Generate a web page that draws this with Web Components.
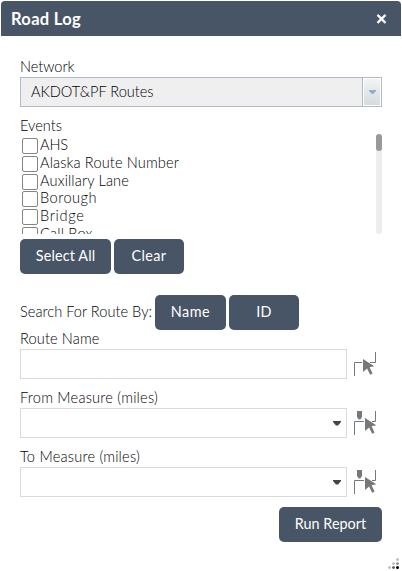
<!DOCTYPE html>
<html lang="en">
<head>
<meta charset="utf-8">
<title>Road Log</title>
<style>
html,body{margin:0;height:100%;overflow:hidden;background:#fff}
body{font-family:Lato,"Open Sans",sans-serif;font-size:14.6px;font-weight:300;color:#000}
</style>
</head>
<body>
<road-log></road-log>
<script>
const define = (name, html, setup) => customElements.define(name, class extends HTMLElement {
  connectedCallback() {
    if (this.shadowRoot) return;
    const t = document.createElement('template');
    t.innerHTML = html;
    this.attachShadow({mode: 'open'}).append(t.content.cloneNode(true));
    if (setup) setup(this, this.shadowRoot);
  }
});

// A line of text whose tracking is fitted to the given width.
define('fit-text', `<style>:host{display:block;white-space:nowrap;line-height:20px;height:18px}span{display:inline-block}</style><span></span>`, (el, root) => {
  const s = root.querySelector('span'), text = el.getAttribute('text');
  s.textContent = text;
  const w = parseFloat(el.getAttribute('w'));
  const natural = s.getBoundingClientRect().width;
  s.style.letterSpacing = ((w - natural) / text.length).toFixed(3) + 'px';
});

define('action-button', `<style>
:host{display:block;height:35px;flex:none}
button{all:unset;box-sizing:border-box;width:100%;height:35px;border-radius:5px;background:#485566;color:#fff;display:flex;justify-content:center;padding-top:7px;font-weight:400;font-size:14.4px}
</style><button><slot></slot></button>`);

define('title-bar', `<style>
:host{display:flex;justify-content:space-between;height:35px;margin:0 1px;background:#485566;color:#fff;border-radius:4px 4px 0 0;font-size:16.5px;font-weight:700}
fit-text{margin:8px 0 0 10px}svg{margin:13px 14px 0 0}
</style><fit-text text="Road Log" w="70"></fit-text>
<svg width="11" height="11" viewBox="0 0 11 11"><path d="M1.5 .9L9.5 8.9M9.5 .9L1.5 8.9" stroke="#fff" stroke-width="2.2"/></svg>`);

define('network-select', `<style>
:host{display:flex;box-sizing:border-box;height:30px;border:1px solid #b1b8ca;background:#efefef}
fit-text{flex:1;margin:4px 0 0 10px}
.b{box-sizing:border-box;width:19px;border-left:1px solid #b1b8ca;background:#fff;padding:1px}
.b div{height:26px;background:linear-gradient(#f2f4f5,#d6dbde);display:flex;align-items:center;justify-content:center}
</style><fit-text text="AKDOT&amp;PF Routes" w="122.5"></fit-text>
<div class="b"><div><svg width="7" height="4" viewBox="0 0 7 4"><path d="M0 0h7v1L4.2 4H2.8L0 1z" fill="#92acd0"/></svg></div></div>`);

define('check-row', `<style>
:host{display:flex;height:17.75px;flex:none}
i{box-sizing:border-box;width:16px;height:16px;margin:4px 2px 0;border:1px solid #858585;border-radius:2px;background:#fff;flex:none}
</style><i></i><slot></slot>`);

define('event-list', `<style>
:host{display:flex;justify-content:space-between;height:100px;overflow:hidden}
.rows{display:flex;flex-direction:column}
.track{width:6px;height:100px;background:#ededed;border-radius:3px}
.thumb{height:17px;border-radius:3px;background:#999}
fit-text{margin-top:1px}
</style><div class="rows">
<check-row><fit-text text="AHS" w="28"></fit-text></check-row>
<check-row><fit-text text="Alaska Route Number" w="139"></fit-text></check-row>
<check-row><fit-text text="Auxillary Lane" w="89"></fit-text></check-row>
<check-row><fit-text text="Borough" w="57"></fit-text></check-row>
<check-row><fit-text text="Bridge" w="44.5"></fit-text></check-row>
<check-row><fit-text text="Call Box" w="52.5"></fit-text></check-row>
</div><div class="track"><div class="thumb"></div></div>`);

define('pick-icon', `<style>:host{display:block;width:24px;height:26px;flex:none}svg{display:block}</style>
<svg width="24" height="26" viewBox="0 0 24 26"><path id="l" fill="none" stroke="#75797c"/><path id="m" fill="#75797c" d=""/><path id="c" fill="#75797c" d="M0 0L11.3 7.3L6.6 8.2L9.6 14.4L7.1 15.7L4.1 9.5L0 13z"/></svg>`, (el, root) => {
  const marker = el.hasAttribute('marker');
  root.getElementById('l').setAttribute('d', marker ? 'M.5 24V10.5H10M21.5 0V10.5H18' : 'M.5 24V10.5H8M21.5 0V10.5H16');
  if (marker) root.getElementById('m').setAttribute('d', 'M3 0h5v6L6.3 8.5H4.7L3 6z');
  root.getElementById('c').setAttribute('transform', marker ? 'translate(11 7)' : 'translate(9 7)');
});

define('measure-field', `<style>
:host{display:block;height:59px}
.row{display:flex;margin-top:2px}
.box{box-sizing:border-box;width:327px;height:30px;border:1px solid #d8dade;display:flex;justify-content:flex-end;align-items:center;padding-right:5px}
pick-icon{margin:3px 0 0 7px}
</style><slot></slot><div class="row"><div class="box"></div><pick-icon></pick-icon></div>`, (el, root) => {
  if (el.hasAttribute('combo')) {
    root.querySelector('.box').innerHTML = '<svg width="8" height="5" viewBox="0 0 8 5"><path d="M0 0H8V1L5 4.5H3L0 1z" fill="#444"/></svg>';
    const p = document.createElement('pick-icon');
    p.setAttribute('marker', '');
    root.querySelector('pick-icon').replaceWith(p);
  }
});

define('resize-grip', `<style>:host{position:absolute;right:2px;bottom:1px;width:12px;height:12px}svg{display:block}</style>
<svg width="12" height="12" viewBox="0 0 12 12"><g fill="#bbb"><circle cx="9.5" cy="1.6" r="1.4"/><circle cx="5.5" cy="5.6" r="1.4"/><circle cx="1.5" cy="9.6" r="1.4"/></g><circle cx="9.5" cy="5.6" r="1.4" fill="#888"/><circle cx="5.5" cy="9.6" r="1.4" fill="#555"/><circle cx="9.5" cy="9.6" r="1.5" fill="#000"/></svg>`);

define('road-log', `<style>
:host{display:block;box-sizing:border-box;position:relative;width:402px;height:571px;padding-top:1px;background:#fff}
main{padding:21px 20px 0}
network-select{margin-top:2px}
.ev{margin-top:9px}
event-list{margin-top:0}
.btns{display:flex;gap:3px;margin-top:5px}
.search{display:flex;margin-top:21px;gap:3px}
.search>fit-text{margin-top:7px;width:132px}
.run{display:flex;justify-content:flex-end;margin-top:1px}
.fields{margin-top:-1px}
</style>
<title-bar></title-bar>
<main>
<fit-text text="Network" w="54.5"></fit-text>
<network-select></network-select>
<fit-text class="ev" text="Events" w="42"></fit-text>
<event-list></event-list>
<div class="btns"><action-button style="width:91px"><fit-text text="Select All" w="59.5"></fit-text></action-button><action-button style="width:70px"><fit-text text="Clear" w="35"></fit-text></action-button></div>
<div class="search"><fit-text text="Search For Route By:" w="132"></fit-text><action-button style="width:71px"><fit-text text="Name" w="39.5"></fit-text></action-button><action-button style="width:70px"><fit-text text="ID" w="15.5"></fit-text></action-button></div>
<div class="fields">
<measure-field><fit-text text="Route Name" w="79.5"></fit-text></measure-field>
<measure-field combo><fit-text text="From Measure (miles)" w="138"></fit-text></measure-field>
<measure-field combo><fit-text text="To Measure (miles)" w="120"></fit-text></measure-field>
</div>
<div class="run"><action-button style="width:103px"><fit-text text="Run Report" w="71.5"></fit-text></action-button></div>
</main>
<resize-grip></resize-grip>`);
</script>
</body>
</html>
